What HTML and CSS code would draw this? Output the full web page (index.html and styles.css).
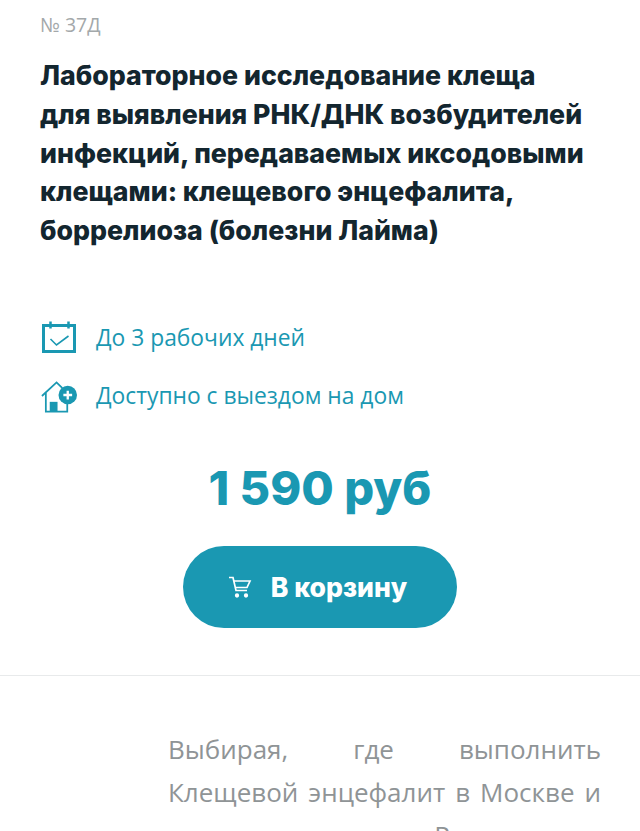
FILE: index.html
```html
<!DOCTYPE html>
<html lang="ru">
<head>
    <meta charset="UTF-8">
    <meta name="viewport" content="width=device-width, initial-scale=1.0">
    <title>Лабораторное исследование клеща</title>
    <link rel="stylesheet" href="styles.css">
</head>
<body>
    <main class="product">
        <div class="code">№ 37Д</div>
        <h1 class="title">Лабораторное исследование клеща<br>для выявления РНК/ДНК возбудителей<br>инфекций, передаваемых иксодовыми<br>клещами: клещевого энцефалита,<br>боррелиоза (болезни Лайма)</h1>

        <ul class="features">
            <li class="feature">
                <svg class="feature-icon" viewBox="0 0 36 34" fill="none" stroke="#1a98b2" stroke-width="3">
                    <rect x="3" y="4.500" width="31" height="26"/>
                    <path d="M10 0.500v7M28 0.500v7" stroke-width="2.500"/>
                    <path d="M10 18l6 6 12-9" stroke-width="1.600"/>
                </svg>
                <span>До 3 рабочих дней</span>
            </li>
            <li class="feature">
                <svg class="feature-icon" viewBox="0 0 38 34" fill="none" stroke="#1a98b2" stroke-width="1.800">
                    <path d="M2 17L17 3l6 6"/>
                    <path d="M6 14v19h22V24"/>
                    <rect x="10" y="23" width="8" height="10" fill="#1a98b2" stroke="none"/>
                    <circle cx="28.500" cy="16" r="9.500" fill="#1a98b2" stroke="none"/>
                    <path d="M24 16h9M28.500 11.500v9" stroke="#fff" stroke-width="2.400"/>
                </svg>
                <span>Доступно с выездом на дом</span>
            </li>
        </ul>

        <div class="price">1 590 руб</div>
        <button class="buy" type="button">
            <svg class="buy-icon" viewBox="0 0 24 22" fill="none" stroke="#fff" stroke-width="1.700">
                <path d="M1 1.500h4l3 13h11"/>
                <path d="M6 5h16l-3 6.500H8"/>
                <circle cx="9" cy="19.500" r="1.300" fill="#fff"/>
                <circle cx="18" cy="19.500" r="1.300" fill="#fff"/>
            </svg>
            В корзину
        </button>
    </main>
    <section class="description">
        <p>Выбирая, где выполнить Клещевой энцефалит в Москве и других городах России, не забудьте</p>
    </section>
</body>
</html>
```

FILE: styles.css
```css
/* Общие стили */
html, body {
    height: 100%;
    overflow: hidden;
}

body {
    margin: 0;
    background-color: #fff;
    font-family: "Open Sans", sans-serif;
}

.product {
    padding: 13px 40px 47px;
    border-bottom: 1px solid #e8eaeb;
}

.code {
    color: #a3a8aa;
    font-size: 19.500px;
    line-height: 24px;
}

.title {
    margin: 19px 0 0;
    color: #13262f;
    font-family: Inter, sans-serif;
    font-size: 26.700px;
    font-weight: 800;
    line-height: 38.800px;
    white-space: nowrap;
}

.features {
    list-style: none;
    margin: 70px 0 0;
    padding: 0;
}

.feature {
    display: flex;
    align-items: center;
    gap: 19px;
    height: 36px;
    margin-bottom: 22px;
    color: #1a98b2;
    font-size: 22.800px;
}

.feature-icon {
    width: 37px;
    height: 34px;
    flex: none;
}

.price {
    margin-top: 44px;
    color: #1a98b2;
    font-family: Inter, sans-serif;
    font-size: 47px;
    font-weight: 800;
    line-height: 60px;
    text-align: center;
}

.buy {
    display: flex;
    align-items: center;
    justify-content: center;
    gap: 19px;
    width: 274px;
    height: 82px;
    margin: 28px auto 0;
    padding: 0 5px 0 0;
    border: none;
    border-radius: 41px;
    background-color: #1a98b2;
    color: #fff;
    font-family: Inter, sans-serif;
    font-size: 26.600px;
    font-weight: 800;
}

.buy-icon {
    width: 24px;
    height: 22px;
}

.description {
    padding: 52px 39px 0 168px;
}

.description p {
    margin: 0;
    color: #8f9496;
    font-size: 26px;
    line-height: 43px;
    text-align: justify;
}
```
